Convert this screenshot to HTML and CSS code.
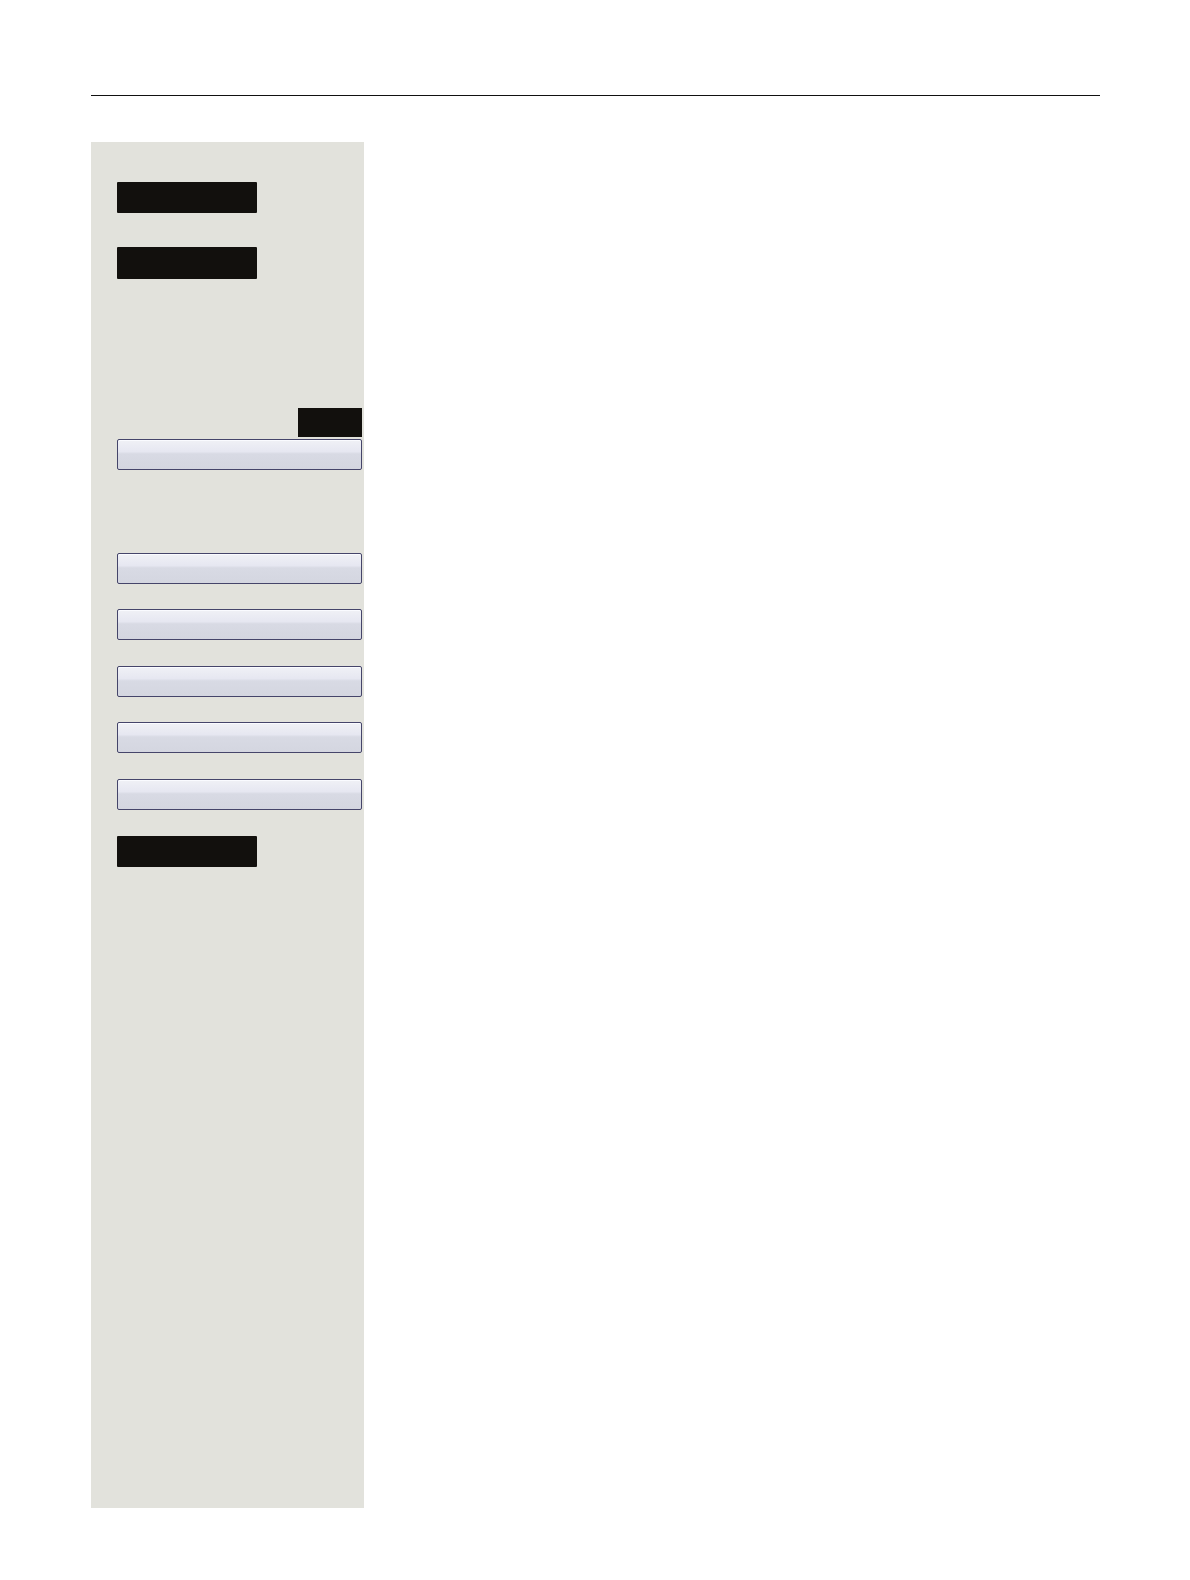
FILE: index.html
```html
<!DOCTYPE html>
<html lang="en">
<head>
<meta charset="utf-8">
<title>Page</title>
<link rel="stylesheet" href="styles.css">
</head>
<body>
<div class="page">
  <div class="rule"></div>
  <div class="content">
    <aside class="sidebar">
      <div class="key key-first"></div>
      <div class="key key-second"></div>
      <div class="tag"></div>
      <div class="btn btn-first"></div>
      <div class="btn btn-gap-big"></div>
      <div class="btn btn-gap-a"></div>
      <div class="btn btn-gap-b"></div>
      <div class="btn btn-gap-a"></div>
      <div class="btn btn-gap-b"></div>
      <div class="key key-last"></div>
    </aside>
    <main class="main"></main>
  </div>
</div>
</body>
</html>
```
FILE: styles.css
```css
html, body {
  margin: 0;
  padding: 0;
  background: #ffffff;
  font-family: "Liberation Sans", Arial, sans-serif;
}

.page {
  width: 1190px;
  height: 1580px;
  display: flex;
  flex-direction: column;
}

.rule {
  margin: 95px 0 0 91px;
  width: 1009px;
  height: 1px;
  background: #111111;
}

.content {
  display: flex;
  margin: 46px 0 0 91px;
}

.sidebar {
  width: 273px;
  height: 1366px;
  background: #e2e2dc;
  display: flex;
  flex-direction: column;
  align-items: flex-start;
  padding: 40px 2px 0 26px;
  box-sizing: border-box;
}

.key {
  width: 140px;
  height: 31px;
  background: #12100d;
  border-radius: 1px;
}

.key-second {
  margin-top: 34px;
  height: 32px;
}

.key-last {
  margin-top: 26px;
}

.tag {
  align-self: flex-end;
  width: 64px;
  height: 29px;
  margin-top: 129px;
  background: #12100d;
}

.btn {
  width: 245px;
  height: 31px;
  box-sizing: border-box;
  border: 1px solid #45456a;
  border-radius: 2px;
  background: linear-gradient(to bottom, #f0f1f6 0%, #e6e7f1 40%, #d8dae4 48%, #d4d6e0 100%);
  box-shadow: inset 0 1px 0 #fafbff;
}

.btn-first { margin-top: 2px; }
.btn-gap-big { margin-top: 83px; }
.btn-gap-a { margin-top: 25px; }
.btn-gap-b { margin-top: 26px; }

.main {
  flex: 1;
}
```
